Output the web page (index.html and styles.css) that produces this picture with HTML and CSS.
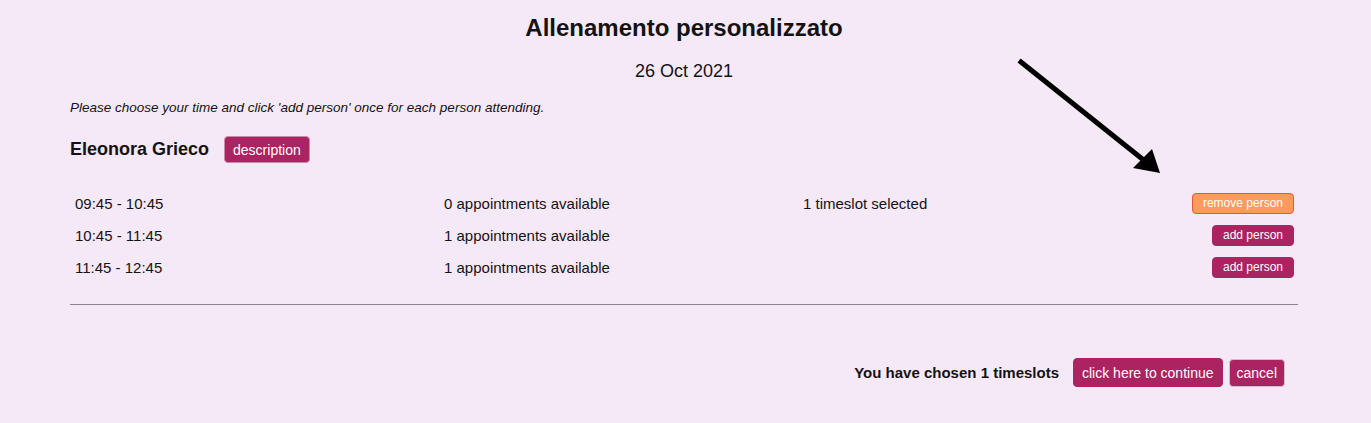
FILE: index.html
```html
<!DOCTYPE html>
<html lang="it">
<head>
<meta charset="utf-8">
<title>Allenamento personalizzato</title>
<link rel="stylesheet" href="styles.css">
</head>
<body>
<div class="page">
  <h1 class="title">Allenamento personalizzato</h1>
  <div class="date">26 Oct 2021</div>
  <p class="hint">Please choose your time and click 'add person' once for each person attending.</p>
  <div class="trainer">
    <span class="trainer-name">Eleonora Grieco</span>
    <button class="btn btn-desc">description</button>
  </div>
  <div class="slots">
    <div class="slot">
      <span>09:45 - 10:45</span>
      <span>0 appointments available</span>
      <span>1 timeslot selected</span>
      <button class="btn btn-small btn-remove">remove person</button>
    </div>
    <div class="slot">
      <span>10:45 - 11:45</span>
      <span>1 appointments available</span>
      <span></span>
      <button class="btn btn-small">add person</button>
    </div>
    <div class="slot">
      <span>11:45 - 12:45</span>
      <span>1 appointments available</span>
      <span></span>
      <button class="btn btn-small">add person</button>
    </div>
  </div>
  <hr class="divider">
  <div class="footer">
    <span class="chosen">You have chosen 1 timeslots</span>
    <button class="btn btn-big">click here to continue</button>
    <button class="btn btn-big btn-cancel">cancel</button>
  </div>
  <svg class="arrow" width="160" height="130" viewBox="1010 55 160 130" aria-hidden="true">
    <line x1="1021" y1="62" x2="1146" y2="162" stroke="#000" stroke-width="5" stroke-linecap="square"/>
    <polygon points="1133,168 1152,149 1160,173" fill="#000"/>
  </svg>
</div>
</body>
</html>
```
FILE: styles.css
```css
html, body {
  margin: 0;
  padding: 0;
  background: #f6e9f7;
}
body {
  font-family: "Liberation Sans", Arial, Helvetica, sans-serif;
  color: #141214;
}
.page {
  position: relative;
  padding: 14px 73px 40px 70px;
}
.title {
  margin: 0;
  font-size: 24px;
  line-height: 28px;
  font-weight: bold;
  text-align: center;
}
.date {
  margin-top: 18px;
  font-size: 18px;
  line-height: 22px;
  text-align: center;
}
.hint {
  margin: 18px 0 0;
  font-size: 13.5px;
  line-height: 16px;
  font-style: italic;
}
.trainer {
  margin-top: 20px;
  display: flex;
  align-items: center;
  gap: 15px;
  height: 27px;
}
.trainer-name {
  font-size: 18px;
  font-weight: bold;
}
.btn {
  font-family: "Liberation Sans", Arial, Helvetica, sans-serif;
  background: #ab2360;
  color: #fff;
  border: 1px solid #ab2360;
  border-radius: 4px;
  cursor: pointer;
  margin: 0;
}
.btn-desc {
  height: 27px;
  padding: 0 8px;
  font-size: 14px;
  border-color: #c98aa6;
}
.slots {
  margin-top: 24px;
}
.slot {
  display: grid;
  grid-template-columns: 369px 359px 1fr auto;
  align-items: center;
  height: 32px;
  padding: 0 4px 0 5px;
  font-size: 15px;
}
.btn-small {
  height: 21px;
  padding: 0 10px;
  font-size: 12px;
  border-radius: 4px;
}
.btn-remove {
  background: #fd9b5a;
  border-color: #e9553e;
}
.divider {
  margin: 21px 0 0;
  border: 0;
  border-top: 1px solid #8c858c;
  height: 0;
}
.footer {
  margin-top: 53px;
  display: flex;
  justify-content: flex-end;
  align-items: center;
  padding-right: 13px;
}
.chosen {
  font-size: 15px;
  font-weight: bold;
  margin-right: 14px;
}
.btn-big {
  height: 29px;
  padding: 0 8px;
  font-size: 14px;
}
.btn-cancel {
  margin-left: 6px;
  height: 28px;
  padding: 0 7px;
  border-color: #d3bccb;
}
.arrow {
  position: absolute;
  left: 1010px;
  top: 55px;
}
```
